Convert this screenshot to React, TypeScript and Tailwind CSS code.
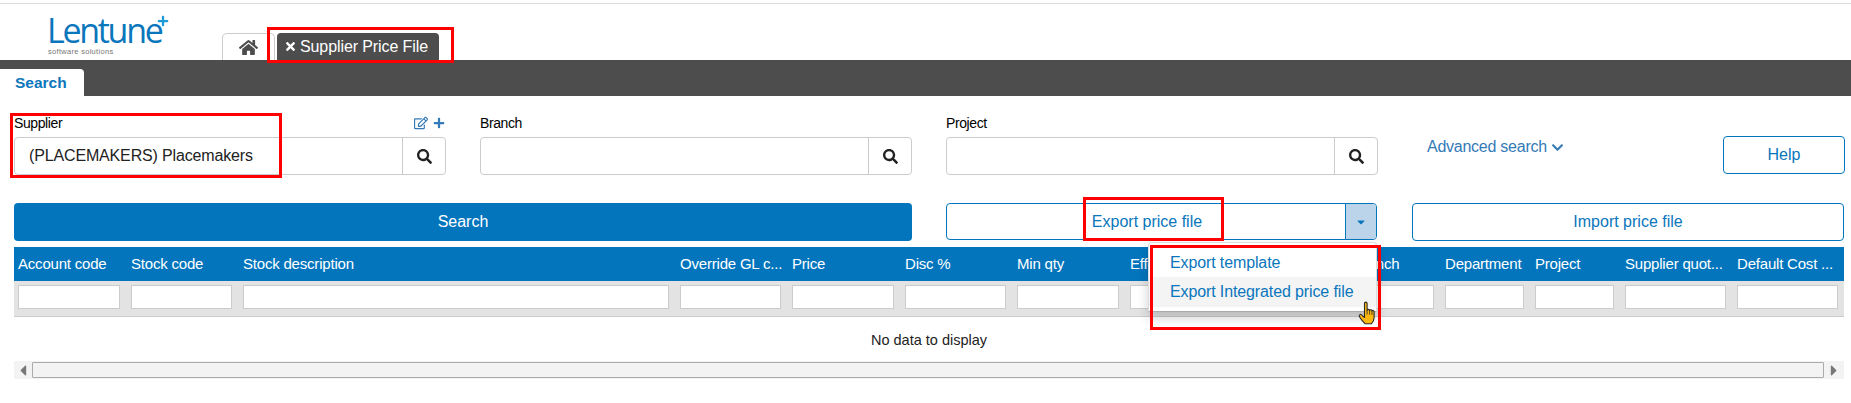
import { FaHome, FaTimes, FaSearch, FaRegEdit, FaPlus, FaChevronDown, FaCaretLeft, FaCaretRight, FaCaretDown } from 'react-icons/fa';

const FONT = 'font-["Liberation_Sans",Arial,sans-serif]';
const GRID = 'grid grid-cols-[102px_101px_426px_101px_102px_101px_102px_101px_100px_81px_79px_79px_101px_101px] gap-x-[11px] px-[4px]';

const COLUMNS = [
  'Account code', 'Stock code', 'Stock description', 'Override GL c...', 'Price', 'Disc %', 'Min qty',
  'Effective from', 'Effective to', 'Branch', 'Department', 'Project', 'Supplier quot...', 'Default Cost ...',
];

function RedBox({ className }: { className: string }) {
  return <div className={`absolute border-[3px] border-[#ff0000] pointer-events-none ${className}`} />;
}

function LookupField({ label, value, icons }: { label: string; value?: string; icons?: boolean }) {
  return (
    <div className="w-[432px]">
      <div className="h-[26px] pb-[2px] flex items-center justify-between pr-[1px] text-[14px] text-black">
        <span className="tracking-[-0.4px]">{label}</span>
        {icons && (
          <span className="flex items-center gap-[5px] text-[#337ab7]">
            <FaRegEdit className="w-[14px] h-[14px]" />
            <FaPlus className="w-[12px] h-[12px]" />
          </span>
        )}
      </div>
      <div className="flex h-[38px] border border-[#ccc] rounded-[4px] bg-white">
        <div className="flex-1 flex items-center pl-[14px] text-[16px] tracking-[-0.15px] text-[#222]">{value}</div>
        <div className="w-[43px] flex items-center justify-center border-l border-[#ccc] text-[#222]">
          <FaSearch className="w-[15px] h-[15px]" />
        </div>
      </div>
    </div>
  );
}

function HandCursor() {
  return (
    <svg viewBox="0 0 18 24" className="absolute left-[1358px] top-[301px] w-[18px] h-[24px]">
      <path
        d="M6.5 2.2c0-1.5 2.6-1.5 2.6 0v7.2c.2-1.4 2.4-1.3 2.5.2.3-1.2 2.3-1 2.4.3.5-.9 2.1-.5 2.1.8v5.8c0 3-1.500 5-2.600 6.200H7.200c-1.600-1.200-5.400-5.600-5.900-7.500-.4-1.500 1.200-2.300 2.200-1.300l3 2.600V2.200z"
        fill="#fdb70f"
        stroke="#2b2b2b"
        strokeWidth="1.1"
        strokeLinejoin="round"
      />
      <path d="M9.100 9.500v4M11.600 9.700v4M14 10v4" stroke="#2b2b2b" strokeWidth="0.8" fill="none" />
    </svg>
  );
}

export default function App() {
  return (
    <div className={`relative w-[1851px] h-[403px] overflow-hidden bg-white ${FONT}`}>
      <div className="h-[3px]" />
      <div className="h-[1px] bg-[#dcdcdc]" />

      {/* top strip with logo and tabs */}
      <div className="h-[56px] flex items-end">
        <div className="w-[222px] self-stretch pl-[47px] pt-[12px] relative">
          <div className="font-['Open_Sans',sans-serif] font-normal text-[#0a76bc] text-[34px] leading-[29px] tracking-[-2.3px]">Lentune</div>
          <div className="text-[7.5px] leading-[8px] text-[#777] pl-[1px] mt-[3px] tracking-[0.3px]">software solutions</div>
          <FaPlus className="absolute left-[157px] top-[11px] w-[12px] h-[12px] text-[#1a9bd7]" />
        </div>
        <div className="w-[53px] h-[27px] flex items-center justify-center bg-white border border-b-0 border-[#ccc] rounded-t-[5px] text-[#4d4d4d]">
          <FaHome className="w-[19px] h-[19px]" />
        </div>
        <div className="ml-[2px] w-[162px] h-[27px] flex items-center pl-[8px] bg-[#4d4d4d] rounded-t-[4px] text-white text-[16px] tracking-[-0.1px]">
          <FaTimes className="w-[11px] h-[13px] mr-[4px]" />
          Supplier Price File
        </div>
      </div>

      {/* dark tab bar */}
      <div className="h-[36px] bg-[#4d4d4d] flex items-end">
        <div className="w-[84px] h-[27px] bg-white rounded-tr-[4px] flex items-center pl-[15px] text-[15.5px] font-bold text-[#0a76bc]">Search</div>
      </div>

      {/* search form */}
      <div className="flex pl-[14px] pt-[15px] h-[107px]">
        <div className="flex gap-x-[34px]">
          <LookupField label="Supplier" value="(PLACEMAKERS) Placemakers" icons />
          <LookupField label="Branch" />
          <LookupField label="Project" />
        </div>
        <div className="ml-[49px] w-[296px] h-[38px] mt-[24px] flex items-start text-[16px] text-[#337ab7]">
          <span className="tracking-[-0.25px] flex items-center gap-[4px]">
            Advanced search
            <FaChevronDown className="w-[13px] h-[13px]" />
          </span>
        </div>
        <div className="w-[122px] h-[38px] mt-[25px] flex items-center justify-center border border-[#0275bd] rounded-[4px] text-[16px] text-[#0a76bc]">Help</div>
      </div>

      {/* actions */}
      <div className="flex pl-[14px] h-[44px]">
        <div className="w-[898px] h-[38px] flex items-center justify-center bg-[#0275bd] rounded-[4px] text-white text-[16px]">Search</div>
        <div className="ml-[34px] w-[431px] h-[37px] flex border border-[#0275bd] rounded-[4px] text-[#0a76bc] text-[16px]">
          <div className="flex-1 flex items-center justify-center pl-[2px]">Export price file</div>
          <div className="w-[31px] flex items-center justify-center bg-[#bcd4ea] border-l border-[#0275bd] rounded-r-[3px]">
            <FaCaretDown className="w-[12px] h-[12px] text-[#0a76bc]" />
          </div>
        </div>
        <div className="ml-[35px] w-[432px] h-[38px] flex items-center justify-center border border-[#0275bd] rounded-[4px] text-[#0a76bc] text-[16px]">Import price file</div>
      </div>

      {/* grid */}
      <div className="ml-[14px] w-[1830px]">
        <div className={`${GRID} h-[34px] items-center bg-[#0275bd] text-white text-[15px]`}>
          {COLUMNS.map((c) => (
            <div key={c} className="whitespace-nowrap tracking-[-0.2px]">{c}</div>
          ))}
        </div>
        <div className={`${GRID} h-[36px] pt-[4px] bg-[#e3e3e3] border-b border-[#ccc]`}>
          {COLUMNS.map((c) => (
            <div key={c} className="h-[24px] bg-white border border-[#ccc]" />
          ))}
        </div>
        <div className="h-[44px] pt-[3px] flex items-center justify-center text-[14.5px] text-[#222]">No data to display</div>
        <div className="h-[18px] flex items-center bg-[#f3f3f3] text-[#777]">
          <div className="w-[18px] flex justify-center"><FaCaretLeft className="w-[14px] h-[17px]" /></div>
          <div className="flex-1 h-[16px] border border-[#aaa] rounded-[1px] bg-[#f3f3f3]" />
          <div className="w-[20px] flex justify-center"><FaCaretRight className="w-[14px] h-[17px]" /></div>
        </div>
      </div>

      {/* open dropdown */}
      <div className="absolute left-[1148px] top-[242px] w-[229px] h-[70px] pt-[5px] bg-white border border-[#ddd] border-b-[#aaa] rounded-t-[4px] shadow-[0_6px_12px_rgba(0,0,0,0.18)] text-[16px] tracking-[-0.12px] text-[#0a76bc]">
        <div className="h-[29px] flex items-center pl-[21px]">Export template</div>
        <div className="h-[30px] flex items-center pl-[21px] bg-[#f4f4f4]">Export Integrated price file</div>
      </div>

      <RedBox className="left-[267px] top-[27px] w-[187px] h-[36px]" />
      <RedBox className="left-[10px] top-[113px] w-[272px] h-[65px]" />
      <RedBox className="left-[1083px] top-[197px] w-[141px] h-[44px]" />
      <RedBox className="left-[1150px] top-[245px] w-[231px] h-[85px]" />
      <HandCursor />
    </div>
  );
}
